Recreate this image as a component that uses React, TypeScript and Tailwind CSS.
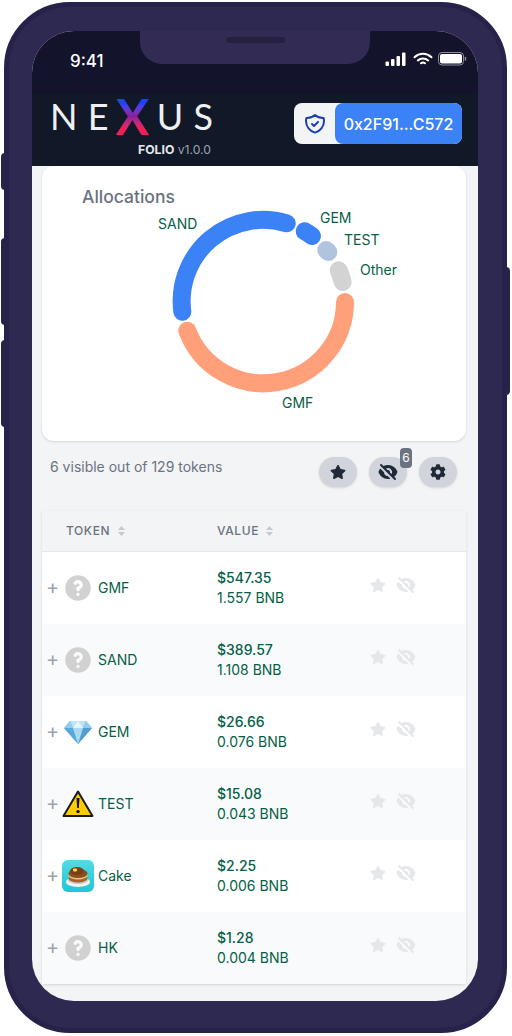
import React from 'react';
import { FaStar, FaCog } from 'react-icons/fa';
import { HiEyeOff, HiOutlineShieldCheck, HiQuestionMarkCircle } from 'react-icons/hi';

type Token = { name: string; usd: string; bnb: string; icon: 'unknown' | 'gem' | 'warn' | 'cake'; striped?: boolean };

const tokens: Token[] = [
  { name: 'GMF', usd: '$547.35', bnb: '1.557 BNB', icon: 'unknown' },
  { name: 'SAND', usd: '$389.57', bnb: '1.108 BNB', icon: 'unknown', striped: true },
  { name: 'GEM', usd: '$26.66', bnb: '0.076 BNB', icon: 'gem' },
  { name: 'TEST', usd: '$15.08', bnb: '0.043 BNB', icon: 'warn', striped: true },
  { name: 'Cake', usd: '$2.25', bnb: '0.006 BNB', icon: 'cake' },
  { name: 'HK', usd: '$1.28', bnb: '0.004 BNB', icon: 'unknown', striped: true },
];

function StatusIcons() {
  return (
    <div className="flex items-center mb-[3px]">
      <svg width="22" height="14" viewBox="0 0 22 14" fill="#fff" className="mr-[6px]">
        <rect x="0.5" y="9.5" width="3.5" height="4.5" rx="1" />
        <rect x="6" y="7" width="3.5" height="7" rx="1" />
        <rect x="11.5" y="4" width="3.5" height="10" rx="1" />
        <rect x="17" y="0.5" width="3.5" height="13.5" rx="1" />
      </svg>
      <svg width="20" height="14" viewBox="0 0 20 14" fill="none" stroke="#fff" strokeWidth="2" strokeLinecap="round" className="mr-[5px]">
        <path d="M1.5 5.2C6.4.6 13.6.6 18.5 5.2" />
        <path d="M4.8 8.4c2.9-2.7 7.5-2.7 10.4 0" />
        <path d="M8 11.3c1.2-1 2.8-1 4 0" />
      </svg>
      <svg width="29" height="14" viewBox="0 0 29 14" fill="none">
        <rect x="0.5" y="0.5" width="25" height="12.5" rx="3.5" stroke="#8d8d99" />
        <rect x="2" y="2" width="22" height="9.5" rx="2" fill="#fff" />
        <rect x="26.7" y="4.8" width="1.5" height="4" rx="0.7" fill="#8d8d99" />
      </svg>
    </div>
  );
}

function Logo() {
  return (
    <div className="flex flex-col items-end w-[163px] -ml-[2px]">
      <div className="flex items-center h-[34px] w-full justify-between text-[36px] leading-none font-normal text-[#eef0f4] font-['Lato','Inter',sans-serif]">
        <span>N</span>
        <span>E</span>
        <span className="-mx-[3px] text-[50px] font-bold text-transparent bg-clip-text bg-gradient-to-b from-[#1e40ff] from-25% via-[#8b1a9a] to-[#f01f5a] to-75%">X</span>
        <span>U</span>
        <span>S</span>
      </div>
      <div className="mt-[9px] mr-[2px] text-[12.2px] leading-4 text-[#9ca3af]">
        <span className="font-bold text-[#e5e7eb]">FOLIO</span> v1.0.0
      </div>
    </div>
  );
}

function Donut() {
  const ring = 'fill-none stroke-[18px] [stroke-linecap:round]';
  const label = 'fill-[#065f46] text-sm';
  // origin of this drawing is the top left of the card (42, 166 on the page)
  return (
    <svg width="424" height="275" viewBox="42 166 424 275" className="block">
      <path d="M182.3 311.7A81.5 81.5 0 0 1 286.7 223.3" className={`${ring} stroke-[#3b82f6]`} />
      <path d="M304.7 231.3A81.5 81.5 0 0 1 312 236" className={`${ring} stroke-[#3b82f6]`} />
      <path d="M326.3 250A81.5 81.5 0 0 1 328.3 252" className={`${ring} stroke-[#b0c4de]`} />
      <path d="M338.7 270.3A81.5 81.5 0 0 1 342.7 282" className={`${ring} stroke-[#d3d3d3]`} />
      <path d="M345 302A81.5 81.5 0 0 1 187.3 330.7" className={`${ring} stroke-[#ffa07a]`} />
      <text x="158" y="229" className={label}>SAND</text>
      <text x="320" y="223" className={label}>GEM</text>
      <text x="344" y="245" className={label}>TEST</text>
      <text x="360" y="275" className={label}>Other</text>
      <text x="282" y="408" className={label}>GMF</text>
    </svg>
  );
}

function GemIcon() {
  return (
    <svg width="28" height="24" viewBox="0 0 28 24">
      <path d="M6 1h16l6 7-14 16L0 8z" fill="#6fb9e2" />
      <path d="M6 1h16l-3 7H9z" fill="#bfe3f6" />
      <path d="M0 8h9l5 16z" fill="#58a9d8" />
      <path d="M28 8h-9l-5 16z" fill="#4f9fd0" />
      <path d="M9 8h10l-5 16z" fill="#a9d8f1" />
      <path d="M6 1l3 7H0zM22 1l-3 7h9z" fill="#93cdee" />
      <path d="M14 1l-5 7h10z" fill="#e4f4fc" />
    </svg>
  );
}

function WarnIcon() {
  return (
    <svg width="32" height="30" viewBox="0 0 32 30">
      <path d="M16 2.5L30.5 27H1.5z" fill="#ffcc00" stroke="#1a1a1a" strokeWidth="2" strokeLinejoin="round" />
      <path d="M14.5 9h3l-.7 10h-1.6z" fill="#111" />
      <circle cx="16" cy="22.6" r="1.7" fill="#111" />
    </svg>
  );
}

function CakeIcon() {
  return (
    <svg width="32" height="32" viewBox="0 0 32 32">
      <defs>
        <linearGradient id="cakeBg" x1="0" y1="0" x2="0" y2="1">
          <stop offset="0" stopColor="#53dbe3" />
          <stop offset="1" stopColor="#1fc7d4" />
        </linearGradient>
      </defs>
      <rect width="32" height="32" rx="6" fill="url(#cakeBg)" />
      <ellipse cx="16" cy="22" rx="12" ry="5" fill="#f3f3f3" />
      <ellipse cx="16" cy="20" rx="10" ry="4" fill="#c9c9c9" />
      <ellipse cx="16" cy="18.5" rx="9.5" ry="4" fill="#a5622a" />
      <ellipse cx="16" cy="15.5" rx="9.5" ry="4" fill="#e8c48a" />
      <ellipse cx="16" cy="13.5" rx="9.5" ry="4.5" fill="#8a4f1d" />
      <ellipse cx="15" cy="11" rx="7" ry="4" fill="#7a3f14" />
      <rect x="11" y="8.5" width="4" height="3" rx="1" fill="#f7d154" />
    </svg>
  );
}

function TokenIcon({ icon }: { icon: Token['icon'] }) {
  if (icon === 'gem') return <GemIcon />;
  if (icon === 'warn') return <WarnIcon />;
  if (icon === 'cake') return <CakeIcon />;
  return <HiQuestionMarkCircle className="text-[#d1d1d1] w-8 h-8 -ml-px" />;
}

function SortArrows() {
  return (
    <svg width="7" height="10" viewBox="0 0 7 10" fill="#c4c8cf">
      <path d="M3.5 0L7 4H0zM3.5 10L0 6h7z" />
    </svg>
  );
}

function RoundButton({ children }: { children: React.ReactNode }) {
  return (
    <button className="relative w-[38px] h-[30px] rounded-full bg-[#d1d5db] shadow-sm flex items-center justify-center text-[#1f2937]">
      {children}
    </button>
  );
}

function TokenRow({ token }: { token: Token }) {
  return (
    <div className={`flex h-[72px] items-center ${token.striped ? 'bg-[#f9fafb]' : 'bg-white'}`}>
      <div className="w-[175px] flex items-center">
        <span className="w-[20px] pl-[4px] -mt-[2px] text-[20px] leading-none text-[#9ca3af]">+</span>
        <span className="w-[32px] h-8 flex items-center justify-center">
          <TokenIcon icon={token.icon} />
        </span>
        <span className="ml-1 text-sm text-[#065f46]">{token.name}</span>
      </div>
      <div className="w-[153px] text-sm leading-5 text-[#065f46]">
        <div className="font-medium">{token.usd}</div>
        <div>{token.bnb}</div>
      </div>
      <div className="flex items-center gap-[10px] -mt-[7px] text-[#e5e7eb]">
        <FaStar className="w-4 h-4" />
        <HiEyeOff className="w-5 h-5" />
      </div>
    </div>
  );
}

export default function App() {
  return (
    <div className="relative w-[512px] h-[1036px] bg-white pt-[2px] pl-[4px] font-['Inter',sans-serif]">
      <div className="absolute left-[1px] top-[153px] w-[4px] h-[37px] rounded-l bg-[#262249]" />
      <div className="absolute left-[1px] top-[238px] w-[4px] h-[87px] rounded-l bg-[#262249]" />
      <div className="absolute left-[1px] top-[340px] w-[4px] h-[87px] rounded-l bg-[#262249]" />
      <div className="absolute left-[506px] top-[267px] w-[4px] h-[128px] rounded-r bg-[#262249]" />

      <div className="relative w-[503px] h-[1031px] rounded-[66px] border-[5px] border-[#262249] bg-[#2e2950] pt-[24px] pl-[23px]">
        <div className="relative w-[446px] h-[970px] rounded-[42px] overflow-hidden bg-[#f3f4f6]">
          <div className="absolute left-[108px] top-0 w-[230px] h-[33px] rounded-b-[22px] bg-[#322c54]">
            <div className="absolute left-[86px] top-[6px] w-[59px] h-[6px] rounded-full bg-[#24213f]" />
          </div>

          <div className="h-[63px] bg-[#13132b] flex items-end justify-between pl-[38px] pr-[11px] pb-[25px]">
            <span className="text-[17px] leading-[16px] font-medium text-white">9:41</span>
            <StatusIcons />
          </div>

          <div className="h-[72px] bg-[#111827] flex justify-between pl-[20px] pr-[16px] pt-[5px]">
            <Logo />
            <div className="mt-[4px] flex h-[41px] w-[168px] rounded-lg bg-[#f3f4f6]">
              <span className="w-[41px] flex items-center justify-center text-[#1e40af]">
                <HiOutlineShieldCheck className="w-6 h-6" />
              </span>
              <span className="flex-1 rounded-lg bg-[#3b82f6] flex items-center justify-center text-base font-medium text-white">
                0x2F91...C572
              </span>
            </div>
          </div>

          <div className="ml-[10px] mr-[12px]">
            <div className="relative h-[275px] rounded-xl bg-white shadow">
              <h3 className="absolute left-[40px] top-[19px] text-[17.5px] leading-6 font-medium text-[#6b7280]">Allocations</h3>
              <Donut />
            </div>

            <div className="mt-4 flex items-start justify-between pl-2 pr-[9px]">
              <span className="text-sm leading-5 text-[#6b7280]">6 visible out of 129 tokens</span>
              <div className="flex gap-3">
                <RoundButton><FaStar className="w-4 h-4" /></RoundButton>
                <RoundButton>
                  <HiEyeOff className="w-5 h-5" />
                  <span className="absolute -top-[9px] -right-[5px] w-3 h-5 rounded bg-[#6b7280] text-xs leading-5 text-white">6</span>
                </RoundButton>
                <RoundButton><FaCog className="w-4 h-4" /></RoundButton>
              </div>
            </div>

            <div className="mt-[24px] shadow">
              <div className="flex h-[41px] items-center bg-[#f3f4f6] border-b border-[#e5e7eb] text-xs font-medium tracking-wider text-[#6b7280]">
                <div className="w-[175px] pl-6 flex items-center gap-2">TOKEN <SortArrows /></div>
                <div className="flex items-center gap-[7px]">VALUE <SortArrows /></div>
              </div>
              {tokens.map(token => (
                <TokenRow key={token.name} token={token} />
              ))}
            </div>
          </div>
        </div>
      </div>
    </div>
  );
}
